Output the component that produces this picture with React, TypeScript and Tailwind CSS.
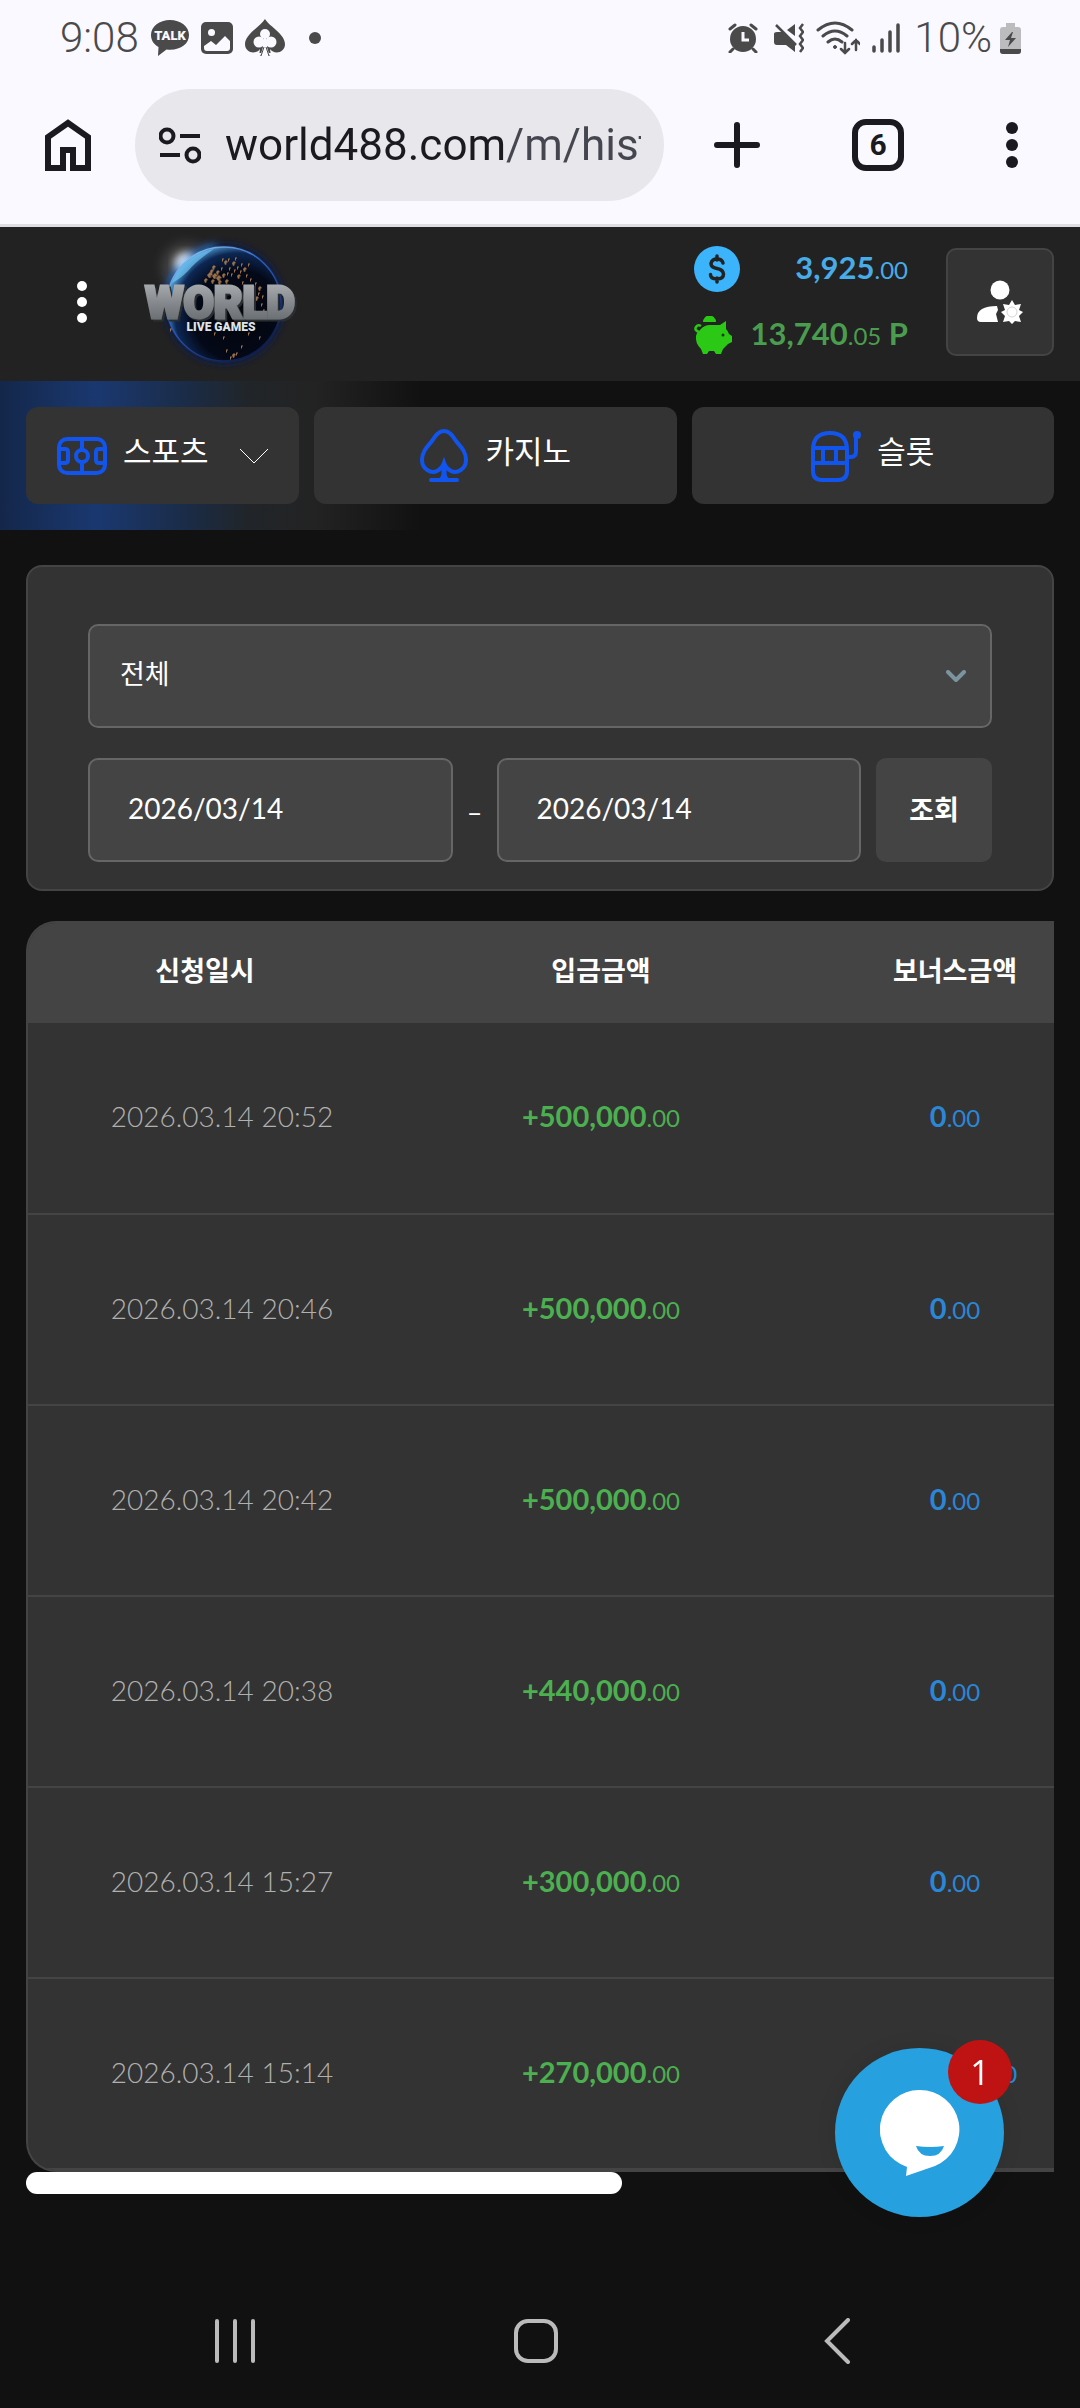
interface DepositRow {
  requestedAt: string;
  amount: string;
  bonus: string;
}

const rows: DepositRow[] = [
  { requestedAt: "2026.03.14 20:52", amount: "+500,000", bonus: "0" },
  { requestedAt: "2026.03.14 20:46", amount: "+500,000", bonus: "0" },
  { requestedAt: "2026.03.14 20:42", amount: "+500,000", bonus: "0" },
  { requestedAt: "2026.03.14 20:38", amount: "+440,000", bonus: "0" },
  { requestedAt: "2026.03.14 15:27", amount: "+300,000", bonus: "0" },
  { requestedAt: "2026.03.14 15:14", amount: "+270,000", bonus: "27,000" },
];

/* City lights on the globe: x, y, radius */
const cityLights = [
  [78, 42, 2], [76, 46, 2], [74, 50, 3], [79, 51, 3], [83, 53, 3], [88, 50, 2], [82, 47, 2],
  [86, 43, 1], [90, 37, 2], [94, 43, 1], [98, 38, 2], [102, 42, 1], [106, 39, 1], [109, 44, 2],
  [96, 49, 1], [103, 51, 2], [111, 50, 1], [115, 54, 1], [70, 55, 2], [91, 56, 2], [120, 58, 1],
  [124, 63, 2], [117, 67, 1], [121, 73, 2], [127, 71, 1], [126, 79, 1], [119, 62, 1],
  [87, 34, 1], [100, 33, 1], [113, 39, 1], [84, 57, 2], [107, 57, 1], [98, 130, 2],
  [101, 128, 1], [95, 132, 1], [91, 125, 1], [88, 112, 1], [113, 108, 1], [124, 112, 1],
  [79, 108, 1], [35, 104, 1], [106, 121, 1], [128, 85, 1], [93, 34, 1], [77, 56, 2],
  [99, 45, 1], [105, 46, 1], [92, 48, 1], [123, 68, 1], [118, 77, 1],
];

function Logo() {
  return (
    <svg viewBox="0 0 170 154" className="h-[154px] w-[170px]" aria-label="World Live Games">
      <defs>
        <radialGradient id="globe" cx="0.62" cy="0.6" r="0.66">
          <stop offset="0" stopColor="#03050b" />
          <stop offset="0.6" stopColor="#040918" />
          <stop offset="0.83" stopColor="#0d2753" />
          <stop offset="1" stopColor="#5cb4ee" />
        </radialGradient>
        <linearGradient id="rim" x1="0" y1="0" x2="0.7" y2="1">
          <stop offset="0" stopColor="#a5e2ff" />
          <stop offset="0.45" stopColor="#2c62c4" />
          <stop offset="1" stopColor="#0a1a4a" />
        </linearGradient>
        <linearGradient id="steel" x1="0" y1="0" x2="0" y2="1">
          <stop offset="0" stopColor="#b4b7ba" />
          <stop offset="0.5" stopColor="#85898d" />
          <stop offset="1" stopColor="#5b6065" />
        </linearGradient>
        <filter id="glow" x="-60%" y="-60%" width="220%" height="220%">
          <feGaussianBlur stdDeviation="6" />
        </filter>
        <filter id="halo" x="-30%" y="-30%" width="160%" height="160%">
          <feGaussianBlur stdDeviation="4" />
        </filter>
        <filter id="extrude">
          <feDropShadow dx="2" dy="2" stdDeviation="0.5" floodColor="#2b2e31" floodOpacity="1" />
        </filter>
      </defs>
      <circle cx="50" cy="42" r="24" fill="#777" opacity="0.4" filter="url(#glow)" />
      <circle cx="88" cy="79" r="59" fill="#0b1b58" filter="url(#halo)" />
      <circle cx="50" cy="39" r="11" fill="#fff" filter="url(#halo)" />
      <path d="M34 62 A57 57 0 0 1 80 22" fill="none" stroke="#3b8de0" strokeWidth="5" filter="url(#halo)" />
      <circle cx="88" cy="79" r="57" fill="url(#globe)" stroke="url(#rim)" strokeWidth="1.5" />
      <path d="M36 58 Q48 30 78 24 Q60 36 52 46 Q44 54 36 58Z" fill="#6fc3f2" opacity="0.7" />
      {cityLights.map(([x, y, r]) => (
        <path
          key={`${x}-${y}`}
          d={`M${x - r} ${y} l${r} ${-r} l${r} ${r} l${-r} 1 l${r - 1} 1 l${-r} 1z`}
          fill="#c08a55"
          opacity="0.8"
        />
      ))}
      <g fontFamily="Roboto, sans-serif" fontWeight="900" textAnchor="middle">
        <text x="84" y="93" fontSize="44" fill="url(#steel)" stroke="url(#steel)" strokeWidth="3" filter="url(#extrude)">WORLD</text>
        <text x="85" y="106" fontSize="12" fill="#dfe3e6">LIVE GAMES</text>
      </g>
    </svg>
  );
}

function StatusBar() {
  return (
    <div className="flex h-[75px] items-center justify-between pl-[60px] pr-[59px] text-[#4a4a4a]">
      <div className="flex items-center gap-3">
        <span className="text-[42px] font-light leading-[48px]">9:08</span>
        <svg viewBox="0 0 38 36" className="h-9 w-[38px]" fill="currentColor">
          <path d="M19 0C8.500 0 0 6.500 0 15c0 5.500 3 9.500 7.500 12L7 36l8.500-6.500c13 1.500 22.500-5 22.500-14.500C38 6.500 29.500 0 19 0Z" />
          <text x="19" y="20" fontSize="13" fontWeight="900" fill="#faf9ff" textAnchor="middle">TALK</text>
        </svg>
        <svg viewBox="0 0 32 32" className="h-8 w-8" fill="currentColor">
          <rect width="32" height="32" rx="5" />
          <circle cx="10.500" cy="10.500" r="3.500" fill="#faf9ff" />
          <path d="M3 24l7-5 5 4 9-9 5 5v7q0 3-3 3H6q-3 0-3-3Z" fill="#faf9ff" />
        </svg>
        <svg viewBox="0 0 40 38" className="h-[38px] w-10" fill="currentColor">
          <path d="M20 0C15 8 0 15 0 25c0 9 11 11 15 5l-1 7h12l-1-7c4 6 15 4 15-5C40 15 25 8 20 0Z" />
          <g fill="#faf9ff">
            <circle cx="20" cy="15" r="5" />
            <circle cx="14" cy="23" r="5.500" />
            <circle cx="26" cy="23" r="5.500" />
            <path d="M20 16l3 9-1 3 3 10H15l3-10-1-3Z" />
            <path d="M14 34h3l-3 4zM26 34h-3l3 4z" />
          </g>
          <path d="M19 28l-3 9M21 28l3 9" stroke="currentColor" strokeWidth="1" />
        </svg>
        <span className="ml-3 size-3 rounded-full bg-[#4a4a4a]" />
      </div>
      <div className="flex items-center gap-3">
        <svg viewBox="0 0 30 30" className="mr-1 size-[30px]" fill="currentColor">
          <circle cx="15" cy="16" r="13" />
          <path d="M2 6l5-4M28 6l-5-4M5 26l-3 3M25 26l3 3" stroke="currentColor" strokeWidth="3" strokeLinecap="round" />
          <path d="M15 9v8h6" fill="none" stroke="#faf9ff" strokeWidth="3" />
        </svg>
        <svg viewBox="0 0 30 30" className="size-[30px]" fill="currentColor">
          <path d="M0 11q0-2 3-2h5l13 13v7l-9-7H3q-3 0-3-3ZM21 1v12l-8-6Z" />
          <path d="M2 2l20 20" stroke="currentColor" strokeWidth="2.500" />
          <path d="M29 1l-3 4 3 4-3 4 3 4-3 4 3 4-3 4" fill="none" stroke="currentColor" strokeWidth="2.500" />
        </svg>
        <svg viewBox="0 0 44 34" className="h-[34px] w-11" fill="none" stroke="currentColor" strokeWidth="3" strokeLinecap="round">
          <path d="M2 9Q19-5 36 9M7 15q12-10 24 0M12 21q7-6 14 0" />
          <circle cx="19" cy="26" r="1.500" fill="currentColor" strokeWidth="1" />
          <path d="M29 22v10m-4-4l4 4 4-4M40 29V19m-4 4l4-4 4 4" strokeWidth="2.500" />
        </svg>
        <svg viewBox="0 0 28 30" className="mr-[2px] h-[30px] w-7" stroke="currentColor" strokeWidth="3.500" strokeLinecap="round">
          <path d="M2 24v4M10 17v11M18 9v19M26 2v26" />
        </svg>
        <span className="-mr-1 text-[42px] font-light leading-[48px]">10%</span>
        <svg viewBox="0 0 21 32" className="h-8 w-[21px]">
          <path d="M6 1h9v4h3q3 0 3 3v21q0 3-3 3H3q-3 0-3-3V8q0-3 3-3h3Z" fill="#bcbcbf" />
          <path d="M0 27h21v2q0 3-3 3H3q-3 0-3-3Z" fill="#4a4a4a" />
          <path d="M12 10l-7 8h5l-2 7 8-9h-5l2-6Z" fill="#4a4a4a" />
        </svg>
      </div>
    </div>
  );
}

function BrowserBar() {
  return (
    <div className="flex h-[152px] items-center border-b-[3px] border-[#dfdee5] pb-[9px] pl-[45px] pr-[62px] text-[#1b1a20]">
      <button type="button" aria-label="Home">
        <svg viewBox="0 0 46 52" className="h-[52px] w-[46px]" fill="none" stroke="currentColor" strokeWidth="6">
          <path d="M3 49V18L23 4l20 14v31H28V31H18v18Z" />
        </svg>
      </button>
      <div className="ml-11 flex h-28 min-w-0 flex-1 items-center rounded-full bg-[#e8e7eb] pl-6 pr-[23px]">
        <svg viewBox="0 0 42 38" className="h-[38px] w-[42px] shrink-0" fill="none" stroke="currentColor" strokeWidth="4">
          <circle cx="8" cy="10" r="6.500" />
          <circle cx="34" cy="29" r="6.500" />
          <path d="M21 10h20M1 29h20" />
        </svg>
        {/* The path after the host is a lighter grey */}
        <input
          type="text"
          aria-label="Address"
          defaultValue="world488.com/m/history"
          className="ml-6 min-w-0 flex-1 bg-[linear-gradient(90deg,#1b1a20_280px,#454750_280px)] bg-clip-text text-[44px] leading-[60px] text-transparent"
        />
      </div>
      <div className="ml-[50px] flex items-center">
        <button type="button" aria-label="New tab">
          <svg viewBox="0 0 46 46" className="size-[46px]" stroke="currentColor" strokeWidth="6" strokeLinecap="round">
            <path d="M23 3v40M3 23h40" />
          </svg>
        </button>
        <button
          type="button"
          aria-label="Tabs"
          className="ml-[92px] flex size-[52px] items-center justify-center rounded-[14px] border-[6px] border-[#1b1a20] text-[30px] font-bold leading-none"
        >
          6
        </button>
        <button type="button" aria-label="Browser menu" className="ml-[102px]">
          <svg viewBox="0 0 12 48" className="h-12 w-3" fill="currentColor">
            <circle cx="6" cy="7" r="6" />
            <circle cx="6" cy="24" r="6" />
            <circle cx="6" cy="41" r="6" />
          </svg>
        </button>
      </div>
    </div>
  );
}

function SiteHeader() {
  return (
    <header className="flex h-[154px] items-center bg-[#222] pb-1 pr-[26px]">
      <button type="button" aria-label="메뉴" className="ml-[77px]">
        <svg viewBox="0 0 10 44" className="h-11 w-[10px]" fill="#fff">
          <circle cx="5" cy="6" r="5" />
          <circle cx="5" cy="22" r="5" />
          <circle cx="5" cy="38" r="5" />
        </svg>
      </button>
      <a href="#" className="ml-[49px]">
        <Logo />
      </a>
      <div className="ml-auto flex w-[214px] flex-col gap-5 text-[31px] font-bold leading-[42px]">
        <div className="flex items-center justify-between text-[#48ace8]">
          <svg viewBox="0 0 46 46" className="size-[46px]">
            <circle cx="23" cy="23" r="23" fill="#3cb4fb" />
            <path
              d="M29 17q-1-4-6-4t-6 4.500q0 4 6 5t6.500 5.500q0 5-6.500 5t-6.500-4.500M23 10v4M23 32v4"
              fill="none"
              stroke="#222"
              strokeWidth="3.500"
              strokeLinecap="round"
            />
          </svg>
          <span className="whitespace-nowrap pb-1">3,925<span className="text-2xl font-normal">.00</span></span>
        </div>
        <div className="flex items-center justify-between text-[#4a9d4e]">
          <svg viewBox="0 0 38 38" className="size-[38px] shrink-0" fill="#2bc916">
            <path d="M9 6a6 6 0 0 1 13 0Z" />
            <path d="M6 14Q10 9 16 9h10l6-4v8q2 2 3 5l3 2v6l-4 2-5 5-2 5h-5l-2-3h-5l-2 3H9l-2-5Q1 27 2 20Q3 16 6 14Z" />
            <path d="M5 16Q0 14 2 11t5-1" fill="none" stroke="#2bc916" strokeWidth="2.500" />
            <circle cx="29" cy="19" r="1.500" fill="#123f0d" />
          </svg>
          <span className="whitespace-nowrap pb-1">13,740<span className="text-2xl font-normal">.05</span> P</span>
        </div>
      </div>
      <button
        type="button"
        aria-label="내 정보"
        className="ml-[38px] flex size-[108px] items-center justify-center rounded-[10px] border-2 border-[#444] bg-[#333]"
      >
        <svg viewBox="0 0 46 44" className="h-11 w-[46px]" fill="#fff">
          <circle cx="23" cy="10" r="9.500" />
          <path d="M0 38q0-12 20-12l1 4-2 4 2 8H4q-4 0-4-4Z" />
          <path d="M35 20l3 5 6-1-2 6 4 2-4 4 2 6-6-1-3 3-3-3-6 1 2-6-4-4 4-2-2-6 6 1Z" />
          <circle cx="35" cy="32" r="5" fill="none" stroke="#aaa" strokeWidth="0.500" />
        </svg>
      </button>
    </header>
  );
}

function CategoryNav() {
  return (
    <nav className="flex gap-[15px] bg-[linear-gradient(90deg,#14274a_0%,#1a3870_9%,#1a2c48_17%,#212529_23%,#232323_29%,#111_39%)] px-[26px] py-[26px] text-[31px] text-white">
      <button type="button" className="flex h-[97px] w-[273px] shrink-0 items-center rounded-xl bg-[#333] pl-[31px]">
        <svg viewBox="0 0 50 38" className="h-[38px] w-[50px]" fill="none" stroke="#1155ee" strokeWidth="4">
          <rect x="2" y="2" width="46" height="34" rx="8" />
          <path d="M25 2v11M25 25v11M2 12h6q3 0 3 3v8q0 3-3 3H2M48 12h-6q-3 0-3 3v8q0 3 3 3h6" />
          <circle cx="25" cy="19" r="6" />
        </svg>
        <span className="ml-4 pb-2">스포츠</span>
        <svg viewBox="0 0 30 16" className="ml-[30px] h-4 w-[30px]" fill="none" stroke="#fff">
          <path d="M1 1l14 14L29 1" />
        </svg>
      </button>
      <button type="button" className="flex h-[97px] flex-1 items-center justify-center rounded-xl bg-[#333]">
        <svg viewBox="0 0 50 54" className="h-[54px] w-[50px]" fill="none" stroke="#1155ee" strokeWidth="4">
          <path d="M25 2C20 2 17 6 13 12C9 17 3 22 3 31c0 9 9 14 15 11c4-2 6-5 7-8c1 3 3 6 7 8c6 3 15-2 15-11c0-9-6-14-10-19C33 6 30 2 25 2Z" />
          <path d="M25 36v14" strokeWidth="5" />
          <path d="M19 50q4-2 4-8h4q0 6 4 8Z" fill="#1155ee" stroke="none" />
          <path d="M12 51h26" strokeLinecap="round" />
        </svg>
        <span className="ml-4 pb-2">카지노</span>
      </button>
      <button type="button" className="flex h-[97px] flex-1 items-center justify-center rounded-xl bg-[#333]">
        <svg viewBox="0 0 50 52" className="h-[52px] w-[50px]" fill="none" stroke="#1155ee" strokeWidth="4">
          <path d="M2 20Q2 3 19 3t17 17v21q0 9-9 9H11q-9 0-9-9ZM2 18h34M2 33h34M12 18v15M25 18v15" />
          <path d="M36 27h4q5 0 5-6V6" />
          <circle cx="46" cy="5" r="4" fill="#1155ee" stroke="none" />
        </svg>
        <span className="ml-4 pb-2">슬롯</span>
      </button>
    </nav>
  );
}

function SearchForm() {
  return (
    <form className="rounded-2xl border-2 border-[#444] bg-[#333] px-[60px] pb-[27px] pt-[57px] text-white">
      <div className="relative">
        <select
          aria-label="구분"
          className="block h-[104px] w-full appearance-none rounded-[10px] border-2 border-[#666] bg-[#444] pb-1 pl-[30px] text-[27px]"
        >
          <option>전체</option>
        </select>
        <svg
          viewBox="0 0 20 12"
          className="pointer-events-none absolute right-[26px] top-[46px] h-3 w-5"
          fill="none"
          stroke="#7a94a0"
          strokeWidth="4"
          strokeLinecap="round"
          strokeLinejoin="round"
        >
          <path d="M2 2l8 8 8-8" />
        </svg>
      </div>
      <div className="mt-[30px] flex items-center">
        <input
          type="text"
          aria-label="시작일"
          defaultValue="2026/03/14"
          className="h-[104px] min-w-0 flex-1 rounded-[10px] border-2 border-[#666] bg-[#444] pb-1 pl-[38px] text-[28px]"
        />
        <span className="w-11 pt-1 text-center text-[27px]">–</span>
        <input
          type="text"
          aria-label="종료일"
          defaultValue="2026/03/14"
          className="h-[104px] min-w-0 flex-1 rounded-[10px] border-2 border-[#666] bg-[#444] pb-1 pl-[38px] text-[28px]"
        />
        <button type="submit" className="ml-[15px] h-[104px] w-[116px] rounded-[10px] bg-[#444] text-[27px] font-bold">
          조회
        </button>
      </div>
    </form>
  );
}

function HistoryTable() {
  return (
    <div>
      <div className="overflow-hidden rounded-l-[30px] border-y-2 border-l-2 border-[#444] bg-[#333]">
        <table className="w-[1770px] table-fixed text-center">
          <colgroup>
            <col className="w-[388px]" />
            <col className="w-[370px]" />
            <col className="w-[338px]" />
            <col />
          </colgroup>
          <thead>
            <tr className="h-[100px] bg-[#444] text-[27px] text-white">
              <th scope="col" className="pb-1 pr-[34px]">신청일시</th>
              <th scope="col" className="pb-1">입금금액</th>
              <th scope="col" className="pb-1">보너스금액</th>
              <td />
            </tr>
          </thead>
          <tbody>
            {rows.map((row) => (
              <tr key={row.requestedAt} className="h-[191px] border-b-2 border-[#444] text-[29px]">
                <td className="pb-1 text-[28px] font-light text-[#b0b0b0]">{row.requestedAt}</td>
                <td className="pb-1 font-bold text-[#4caf50]">
                  {row.amount}<span className="text-2xl font-normal">.00</span>
                </td>
                <td className="pb-1 font-bold text-[#2b86d6]">
                  {row.bonus}<span className="text-2xl font-normal">.00</span>
                </td>
                <td />
              </tr>
            ))}
          </tbody>
        </table>
      </div>
      {/* Horizontal scroll thumb */}
      <div className="h-[22px] w-[58%] rounded-full bg-white" />
    </div>
  );
}

function ChatButton() {
  return (
    <button
      type="button"
      aria-label="채팅"
      className="fixed bottom-[191px] right-[76px] size-[169px] rounded-full bg-[#26a0df] shadow-[0_0_20px_rgba(0,0,0,0.1)]"
    >
      <svg viewBox="0 0 80 86" className="mx-auto h-[86px] w-20">
        <path d="M40 0a39.500 39.500 0 0 1 15 76L26 86l1-9A39.500 39.500 0 0 1 40 0Z" fill="#fff" />
        <path d="M36 56q14 2 28 0q-3 10-14 10t-14-10Z" fill="#26a0df" />
      </svg>
      <span className="absolute -right-2 -top-2 flex size-16 items-center justify-center rounded-full bg-[#bf1313] font-['Open_Sans',sans-serif] text-[34px] leading-none text-white">
        1
      </span>
    </button>
  );
}

function SystemNav() {
  return (
    <div className="grid grid-cols-3 place-items-center pb-11 pl-[84px] pr-[92px] text-[#bbb]">
      <button type="button" aria-label="Recents">
        <svg viewBox="0 0 42 46" className="h-[46px] w-[42px]" stroke="currentColor" strokeWidth="4" strokeLinecap="round">
          <path d="M3 3v40M21 3v40M39 3v40" />
        </svg>
      </button>
      <button type="button" aria-label="Home screen" className="size-11 rounded-[14px] border-4 border-[#bbb]" />
      <button type="button" aria-label="Back">
        <svg viewBox="0 0 26 46" className="h-[46px] w-[26px]" fill="none" stroke="currentColor" strokeWidth="4" strokeLinecap="round">
          <path d="M24 2L3 23l21 21" />
        </svg>
      </button>
    </div>
  );
}

export default function App() {
  return (
    <div className="flex min-h-screen flex-col bg-[#111] font-['Lato','Noto_Sans_CJK_KR',sans-serif]">
      <div className="bg-[#faf9ff] font-['Roboto',sans-serif]">
        <StatusBar />
        <BrowserBar />
      </div>
      <SiteHeader />
      <CategoryNav />
      <main className="flex flex-col gap-[30px] px-[26px] pt-[35px]">
        <SearchForm />
        <HistoryTable />
      </main>
      <div className="mt-auto">
        <SystemNav />
      </div>
      <ChatButton />
    </div>
  );
}
